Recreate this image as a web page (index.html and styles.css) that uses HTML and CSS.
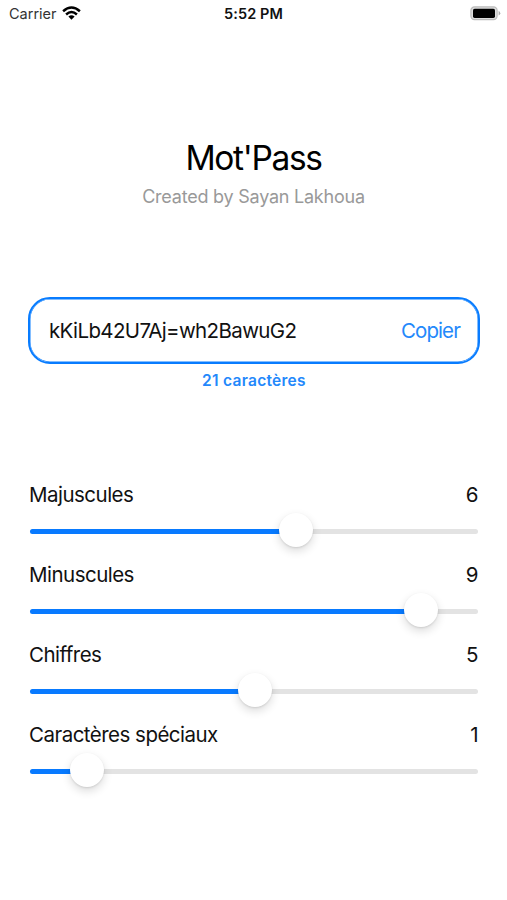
FILE: index.html
```html
<!DOCTYPE html>
<html lang="fr">
<head>
<meta charset="utf-8">
<title>Mot'Pass</title>
<link rel="stylesheet" href="styles.css">
</head>
<body>
<div class="status">
  <div class="carrier"><span>Carrier</span>
    <svg class="wifi" width="19" height="14" viewBox="0 0 19 14"><g fill="none" stroke="#000" stroke-width="2.5"><path d="M1.1 5.2Q9.5-2.2 17.9 5.2"/><path d="M4.1 8.5Q9.5 3.6 14.9 8.5"/></g><path d="M9.5 13.7 6.4 10.5Q9.5 7.8 12.6 10.5Z"/></svg>
  </div>
  <span class="time">5:52 PM</span>
  <svg class="battery" width="31" height="15" viewBox="0 0 31 15"><rect x=".9" y=".9" width="26.2" height="12.8" rx="3.6" fill="#ddd" stroke="#bbb" stroke-width="1.2"/><rect x="3" y="2.7" width="22" height="9.2" rx="1.6"/><path d="M28.6 4.8Q32 7.2 28.6 9.6Z" fill="#aaa"/></svg>
</div>
<header class="header">
  <h1 class="title">Mot'Pass</h1>
  <p class="subtitle">Created by Sayan Lakhoua</p>
</header>
<section class="result">
  <div class="field"><span class="password">kKiLb42U7Aj=wh2BawuG2</span><button class="copy">Copier</button></div>
  <p class="count">21 caractères</p>
</section>
<main class="sliders">
  <div class="row"><div class="labels"><span>Majuscules</span><span>6</span></div><div class="track"><div class="fill" style="width:266px"><i class="knob"></i></div></div></div>
  <div class="row"><div class="labels"><span>Minuscules</span><span>9</span></div><div class="track"><div class="fill" style="width:391px"><i class="knob"></i></div></div></div>
  <div class="row"><div class="labels"><span>Chiffres</span><span>5</span></div><div class="track"><div class="fill" style="width:225px"><i class="knob"></i></div></div></div>
  <div class="row"><div class="labels"><span>Caractères spéciaux</span><span>1</span></div><div class="track"><div class="fill" style="width:57px"><i class="knob"></i></div></div></div>
</main>
</body>
</html>
```
FILE: styles.css
```css
* { box-sizing: border-box; margin: 0; padding: 0; }
body { width: 507px; height: 900px; background: #fff; color: #111; font-family: Inter, "Liberation Sans", sans-serif; overflow: hidden; }
.status { display: grid; grid-template-columns: 1fr auto 1fr; align-items: center; height: 28px; padding: 0 6px 0 9px; font-size: 14.5px; }
.carrier { display: flex; align-items: center; gap: 5px; margin-top: -2px; color: #333; }
.wifi { margin-top: -1px; }
.time { margin: -2px 3px 0 0; font-weight: 600; font-size: 14.5px; letter-spacing: .1px; color: #111; }
.battery { justify-self: end; margin-top: -2px; }
.header { padding-top: 108px; text-align: center; }
.title { font-size: 33.5px; line-height: 44px; font-weight: 400; letter-spacing: -1.35px; color: #000; }
.subtitle { margin-top: 5px; font-size: 18px; line-height: 24px; letter-spacing: -.23px; color: #999; }
.result { margin: 88px 27px 0 28px; }
.field { display: flex; align-items: center; justify-content: space-between; height: 67px; padding: 0 18px 0 19px; border: 2px solid #087cff; border-radius: 22px; box-shadow: inset 0 0 0 .5px #087cff; font-size: 20.5px; }
.password { letter-spacing: -.63px; }
.copy { border: 0; background: none; font: inherit; letter-spacing: -.9px; color: #2388fb; }
.count { margin-top: 6px; text-align: center; font-size: 15.5px; line-height: 22px; font-weight: 600; letter-spacing: .28px; color: #2388fb; }
.sliders { display: flex; flex-direction: column; margin: 88px 29px 0; }
.row { height: 80px; }
.labels { display: flex; justify-content: space-between; font-size: 20.5px; line-height: 30px; letter-spacing: -.52px; }
.track { height: 5px; margin: 18.5px 0 0 1px; border-radius: 3px; background: #e3e3e3; }
.fill { position: relative; height: 5px; border-radius: 3px; background: #087aff; }
.knob { position: absolute; right: -17px; top: -16px; width: 34px; height: 34px; border-radius: 50%; background: #fff; box-shadow: 0 4px 10px rgba(0,0,0,.14), 0 1px 2px rgba(0,0,0,.1); }
```
